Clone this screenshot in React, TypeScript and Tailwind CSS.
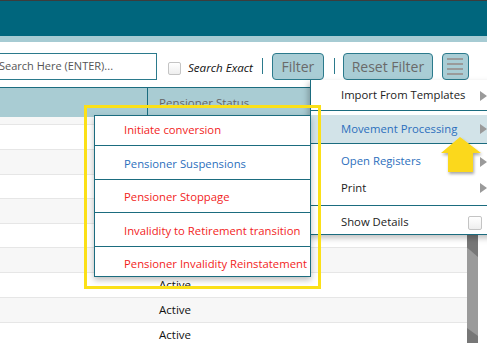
import React from "react";

const rowsBg = ["bg-[#f7f7f7]", "bg-white"];

function Tri() {
  return (
    <svg width="8" height="10" viewBox="0 0 8 10" className="shrink-0">
      <path d="M1 0 L8 5 L1 10 Z" fill="#9a9a9a" />
    </svg>
  );
}

export default function App() {
  const rows = [
    { h: "h-[8px]", t: "" },
    { h: "h-[25px]", t: "" },
    { h: "h-[25px]", t: "" },
    { h: "h-[24px]", t: "" },
    { h: "h-[25px]", t: "" },
    { h: "h-[24px]", t: "" },
    { h: "h-[25px]", t: "" },
    { h: "h-[25px]", t: "Active" },
    { h: "h-[25px]", t: "Active" },
    { h: "h-[25px]", t: "Active" },
  ];
  return (
    <div
      className="relative w-[487px] h-[343px] overflow-hidden bg-white"
      style={{ fontFamily: '"Open Sans", sans-serif' }}
    >
      <div className="h-[1px] bg-[#3c3c3c]" />
      <div className="h-[35px] bg-[#00667d]" />
      <div className="h-[6px] bg-[#a6cbd3]" />
      {/* toolbar */}
      <div className="h-[45px] flex items-start pt-[11px]">
        <div className="ml-[-24px] w-[181px] h-[27px] border border-[#2b7a8c] flex items-center pl-[22px] text-[11px] text-[#555] whitespace-nowrap">
          Search Here (ENTER)...
        </div>
        <div className="ml-[11px] mt-[9px] w-[13px] h-[13px] border border-[#c4c4c4] rounded-[2px] bg-gradient-to-b from-white to-[#eee]" />
        <div className="ml-[7px] mt-[6px] text-[11.6px] italic text-[#111] whitespace-nowrap">Search Exact</div>
        <div className="ml-[9px] mt-[5px] w-[1px] h-[16px] bg-[#2b7a8c]" />
        <button className="ml-[9px] w-[52px] h-[27px] rounded-[4px] border border-[#2b7a8c] bg-[#a9cdd5] text-[14px] font-medium text-[#6a6a6a] flex items-center justify-center">
          Filter
        </button>
        <div className="ml-[10px] mt-[5px] w-[1px] h-[16px] bg-[#2b7a8c]" />
        <button className="ml-[8px] w-[90px] h-[27px] rounded-[4px] border border-[#2b7a8c] bg-[#a9cdd5] text-[14px] font-medium text-[#6a6a6a] flex items-center justify-center whitespace-nowrap">
          Reset Filter
        </button>
        <button className="ml-[9px] w-[27px] h-[27px] rounded-[4px] border border-[#2b7a8c] bg-[#a9cdd5] flex flex-col items-center justify-center gap-[3.3px]">
          <span className="block w-[16px] h-[1.7px] bg-[#9a9a9a]" />
          <span className="block w-[16px] h-[1.7px] bg-[#9a9a9a]" />
          <span className="block w-[16px] h-[1.7px] bg-[#9a9a9a]" />
          <span className="block w-[16px] h-[1.7px] bg-[#9a9a9a]" />
        </button>
      </div>
      {/* table */}
      <div className="flex">
        <div className="w-[467px]">
          <div className="h-[30px] border-t border-[#1b6c7f] bg-[#a9ccd3] flex">
            <div className="w-[148px] border-r border-[#1b6c7f]" />
            <div className="pl-[11px] flex items-center text-[11.5px] text-[#666]">Pensioner Status</div>
          </div>
          {rows.map((r, i) => (
            <div
              key={i}
              className={`${r.h} ${rowsBg[i % 2]} border-b border-[#e6e6e6] flex items-center pl-[159px] text-[11.5px] text-[#111]`}
            >
              {r.t}
            </div>
          ))}
        </div>
        <div className="w-[11px] mt-[146px] h-[200px] bg-[#9a9a9a] relative">
          <div className="absolute left-0 top-0 w-full h-[24px] bg-[#777]" style={{ clipPath: "polygon(0 0,100% 0,100% 100%,0 60%)" }} />
          <div className="absolute left-0 top-[95px] w-full h-[20px] bg-[#777]" style={{ clipPath: "polygon(0 0,100% 40%,100% 100%,0 100%)" }} />
        </div>
      </div>

      {/* main dropdown menu */}
      <div className="absolute left-[310px] top-[80px] w-[190px] h-[155px] bg-white border-l border-b border-[#1b6c7f] shadow-[-2px_3px_6px_rgba(0,0,0,0.25)] text-[11.3px]">
        <div className="h-[30px] flex items-center pl-[30px] text-[#222] pt-[1px]">
          <span className="w-[138px] whitespace-nowrap">Import From Templates</span>
          <Tri />
        </div>
        <div className="h-[1px] bg-[#1b6c7f]" />
        <div className="h-[4px]" />
        <div className="h-[28px] bg-[#d2e3e8] flex items-center pl-[30px] text-[#2c6fbd]">
          <span className="w-[138px] whitespace-nowrap">Movement Processing</span>
          <Tri />
        </div>
        <div className="h-[1px] bg-[#1b6c7f]" />
        <div className="h-[31px] flex items-center pl-[30px] text-[#2c6fbd] pt-[4px]">
          <span className="w-[138px] whitespace-nowrap">Open Registers</span>
          <Tri />
        </div>
        <div className="h-[24px] flex items-center pl-[30px] text-[#222] pt-[2px]">
          <span className="w-[138px] whitespace-nowrap">Print</span>
          <Tri />
        </div>
        <div className="h-[6px]" />
        <div className="h-[1px] bg-[#1b6c7f]" />
        <div className="h-[27px] flex items-center pl-[30px] text-[#222] pt-[6px]">
          <span className="w-[127px] whitespace-nowrap">Show Details</span>
          <div className="w-[14px] h-[14px] border border-[#c4c4c4] rounded-[2px] bg-gradient-to-b from-white to-[#eee]" />
        </div>
      </div>

      {/* submenu */}
      <div className="absolute left-[94px] top-[115px] w-[217px] h-[162px] bg-white border border-[#1b6c7f] shadow-[0_3px_6px_rgba(0,0,0,0.25)] text-[11.3px] flex flex-col">
        <div className="h-[29px] flex items-center pl-[29px] text-[#f21d1d]">Initiate conversion</div>
        <div className="h-[34px] border-t border-[#1b6c7f] flex items-center pl-[29px] pt-[3px] text-[#2c6fbd]">Pensioner Suspensions</div>
        <div className="h-[33px] border-t border-[#1b6c7f] flex items-center pl-[29px] pt-[3px] text-[#f21d1d]">Pensioner Stoppage</div>
        <div className="h-[34px] border-t border-[#1b6c7f] flex items-center pl-[29px] pt-[3px] text-[#f21d1d] whitespace-nowrap">Invalidity to Retirement transition</div>
        <div className="flex-1 border-t border-[#1b6c7f] flex items-center pl-[29px] pt-[6px] text-[#f21d1d] whitespace-nowrap">Pensioner Invalidity Reinstatement</div>
      </div>

      {/* yellow highlight */}
      <div className="absolute left-[84px] top-[105px] w-[237px] h-[184px] border-[3px] border-[#fbe018]" />

      {/* yellow arrow */}
      <svg className="absolute left-[436px] top-[134px]" width="50" height="44" viewBox="0 0 50 44">
        <defs>
          <filter id="sh" x="-20%" y="-20%" width="150%" height="150%">
            <feDropShadow dx="1" dy="2" stdDeviation="1.5" floodColor="#000" floodOpacity="0.35" />
          </filter>
        </defs>
        <path d="M24 3 L45 19 L37 19 L37 38 L12 38 L12 19 L5 19 Z" fill="#fbd81a" filter="url(#sh)" />
      </svg>
    </div>
  );
}
